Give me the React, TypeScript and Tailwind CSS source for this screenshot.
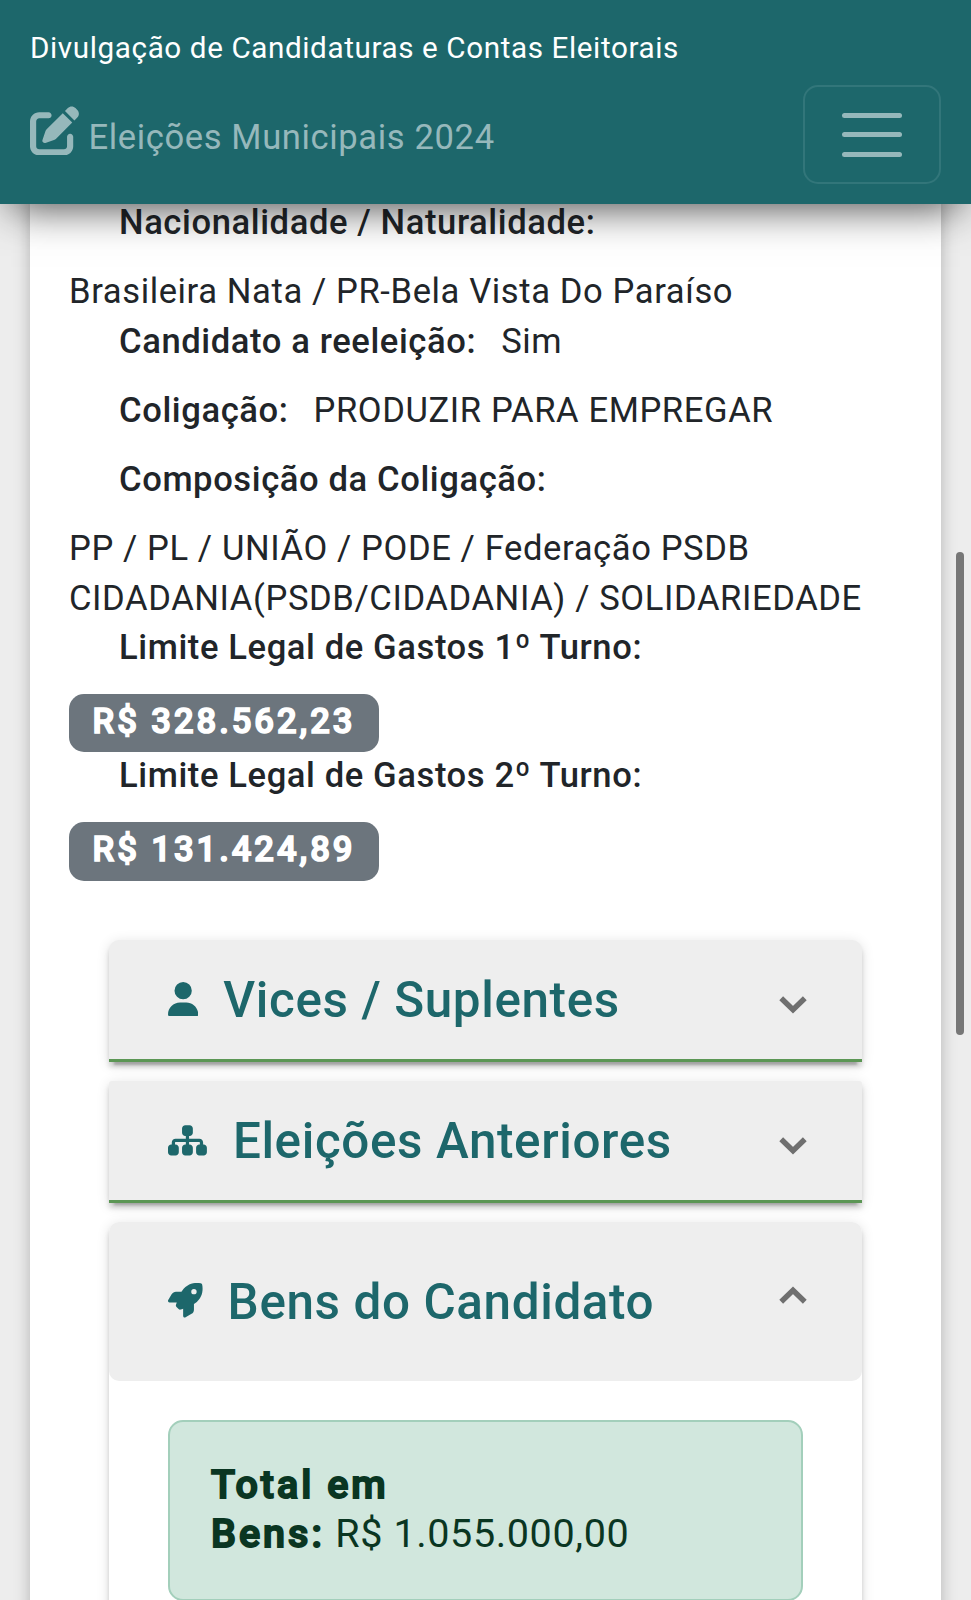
import type { ReactNode } from "react";
import { FaPenToSquare, FaRocket, FaSitemap, FaUser } from "react-icons/fa6";

function Label({ children }: { children: ReactNode }) {
  return <dt className="mb-[19.8px] ml-[50px] whitespace-nowrap font-medium">{children}</dt>;
}

function Badge({ children }: { children: ReactNode }) {
  return (
    <dd className="flex h-[59.2px] pt-[1.5px]">
      <span className="h-[58.5px] w-[310px] shrink-0 whitespace-nowrap rounded-[15px] bg-[#6c757d] pl-[23.5px] leading-[55px] font-medium tracking-[2.95px] text-white [-webkit-text-stroke:1.6px_#fff]">
        {children}
      </span>
    </dd>
  );
}

function Chevron({ up = false }: { up?: boolean }) {
  return (
    <svg
      viewBox="0 0 28 18"
      className={["h-[18px] w-[28px] shrink-0", up ? "rotate-180 -mt-[12px]" : "mt-[11px]"].join(" ")}
      fill="none"
      stroke="#6f6f6f"
      strokeWidth="5.4"
    >
      <path d="M2.2 2.2 14 13.8 25.8 2.2" />
    </svg>
  );
}

const panelShadow =
  "shadow-[0_7.4px_2.5px_-5px_rgba(0,0,0,0.2),0_5px_5px_0_rgba(0,0,0,0.14),0_2.5px_12.4px_0_rgba(0,0,0,0.12)]";

export default function App() {
  return (
    <div className="relative flex h-[1600px] w-[971px] flex-col overflow-hidden bg-[#ededed] font-[Roboto,sans-serif] text-[34.6px] leading-[49.4px] text-[#212529]">
      <header className="relative z-10 h-[204px] shrink-0 bg-[#1d676b] px-[30px] pt-[23.4px] shadow-[0_14px_40px_-11px_rgba(0,0,0,0.75)]">
        <div className="text-[29.65px] tracking-[0.6px] text-white">Divulgação de Candidaturas e Contas Eleitorais</div>
        <div className="mt-[12.6px] flex items-start justify-between">
          <div className="flex items-start text-[#96b8bb]">
            <FaPenToSquare className="mt-[20.5px] size-[49.4px]" />
            <span className="ml-[9px] mt-[28px] tracking-[0.62px]">Eleições Municipais 2024</span>
          </div>
          <button
            type="button"
            aria-label="Menu"
            className="flex h-[99px] w-[138px] items-center justify-center rounded-[15px] border-2 border-[#32767a]"
          >
            <span className="flex flex-col gap-[14.5px]">
              <span className="h-[5px] w-[60px] rounded-full bg-[#96b8bb]" />
              <span className="h-[5px] w-[60px] rounded-full bg-[#96b8bb]" />
              <span className="h-[5px] w-[60px] rounded-full bg-[#96b8bb]" />
            </span>
          </button>
        </div>
      </header>

      <main className="mx-[30px] -mt-[6px] h-[1440px] shrink-0 bg-white px-[39px] shadow-[0_5px_15px_0_rgba(0,0,0,0.25)]">
        <dl className="tracking-[0.6px]">
          <Label>Nacionalidade / Naturalidade:</Label>
          <dd>Brasileira Nata / PR-Bela Vista Do Paraíso</dd>
          <div className="flex">
            <Label>Candidato a reeleição:</Label>
            <dd className="ml-[25px]">Sim</dd>
          </div>
          <div className="flex">
            <Label>Coligação:</Label>
            <dd className="ml-[25px] whitespace-nowrap">PRODUZIR PARA EMPREGAR</dd>
          </div>
          <Label>Composição da Coligação:</Label>
          <dd className="whitespace-nowrap">
            PP / PL / UNIÃO / PODE / Federação PSDB
            <br />
            CIDADANIA(PSDB/CIDADANIA) / SOLIDARIEDADE
          </dd>
          <Label>Limite Legal de Gastos 1º Turno:</Label>
          <Badge>R$ 328.562,23</Badge>
          <Label>Limite Legal de Gastos 2º Turno:</Label>
          <Badge>R$ 131.424,89</Badge>
        </dl>

        <div className="mx-[40px] mt-[60.6px] flex w-[753px] flex-col text-[49.4px] font-medium tracking-[0.62px] text-[#1d676b]">
          <section
            className={`flex h-[121.5px] items-center rounded-t-[10px] border-b-[3px] border-[#5b9654] bg-[#eeeeee] pl-[59px] pr-[55px] ${panelShadow}`}
          >
            <FaUser className="-mt-[1px] h-[34.6px] w-[30.3px]" />
            <h2 className="ml-[25px] mt-[2px] flex-1">Vices / Suplentes</h2>
            <Chevron />
          </section>

          <section
            className={`mt-[19.3px] flex h-[121.5px] items-center rounded-t-[3px] border-b-[3px] border-[#5b9654] bg-[#eeeeee] pl-[59px] pr-[55px] ${panelShadow}`}
          >
            <FaSitemap className="-mt-[1px] h-[34.6px] w-[38.9px]" />
            <h2 className="ml-[26px] mt-[2px] flex-1">Eleições Anteriores</h2>
            <Chevron />
          </section>

          <section className={`mt-[19.3px] h-[420px] rounded-[10px] bg-white ${panelShadow}`}>
            <div className="flex h-[158.5px] items-center rounded-[10px] bg-[#eeeeee] pl-[59px] pr-[55px]">
              <FaRocket className="-mt-[1px] size-[34.6px]" />
              <h2 className="ml-[25px] mt-[2px] flex-1">Bens do Candidato</h2>
              <Chevron up />
            </div>
            <div className="mx-[59px] mt-[39.5px] h-[181px] rounded-[15px] border-2 border-[#a3cfbb] bg-[#d1e7dd] pl-[41px] pt-[38px] text-[39.5px] font-normal text-[#0a3622]">
              <b className="font-medium tracking-[3px] [-webkit-text-stroke:1.9px_#0a3622]">
                Total em
                <br />
                Bens:
              </b>{" "}
              R$ 1.055.000,00
            </div>
          </section>
        </div>
      </main>

      {/* overlay scroll thumb */}
      <div className="absolute right-[7px] top-[552px] z-20 h-[483px] w-[8px] rounded-full bg-[#777777]" />
    </div>
  );
}
